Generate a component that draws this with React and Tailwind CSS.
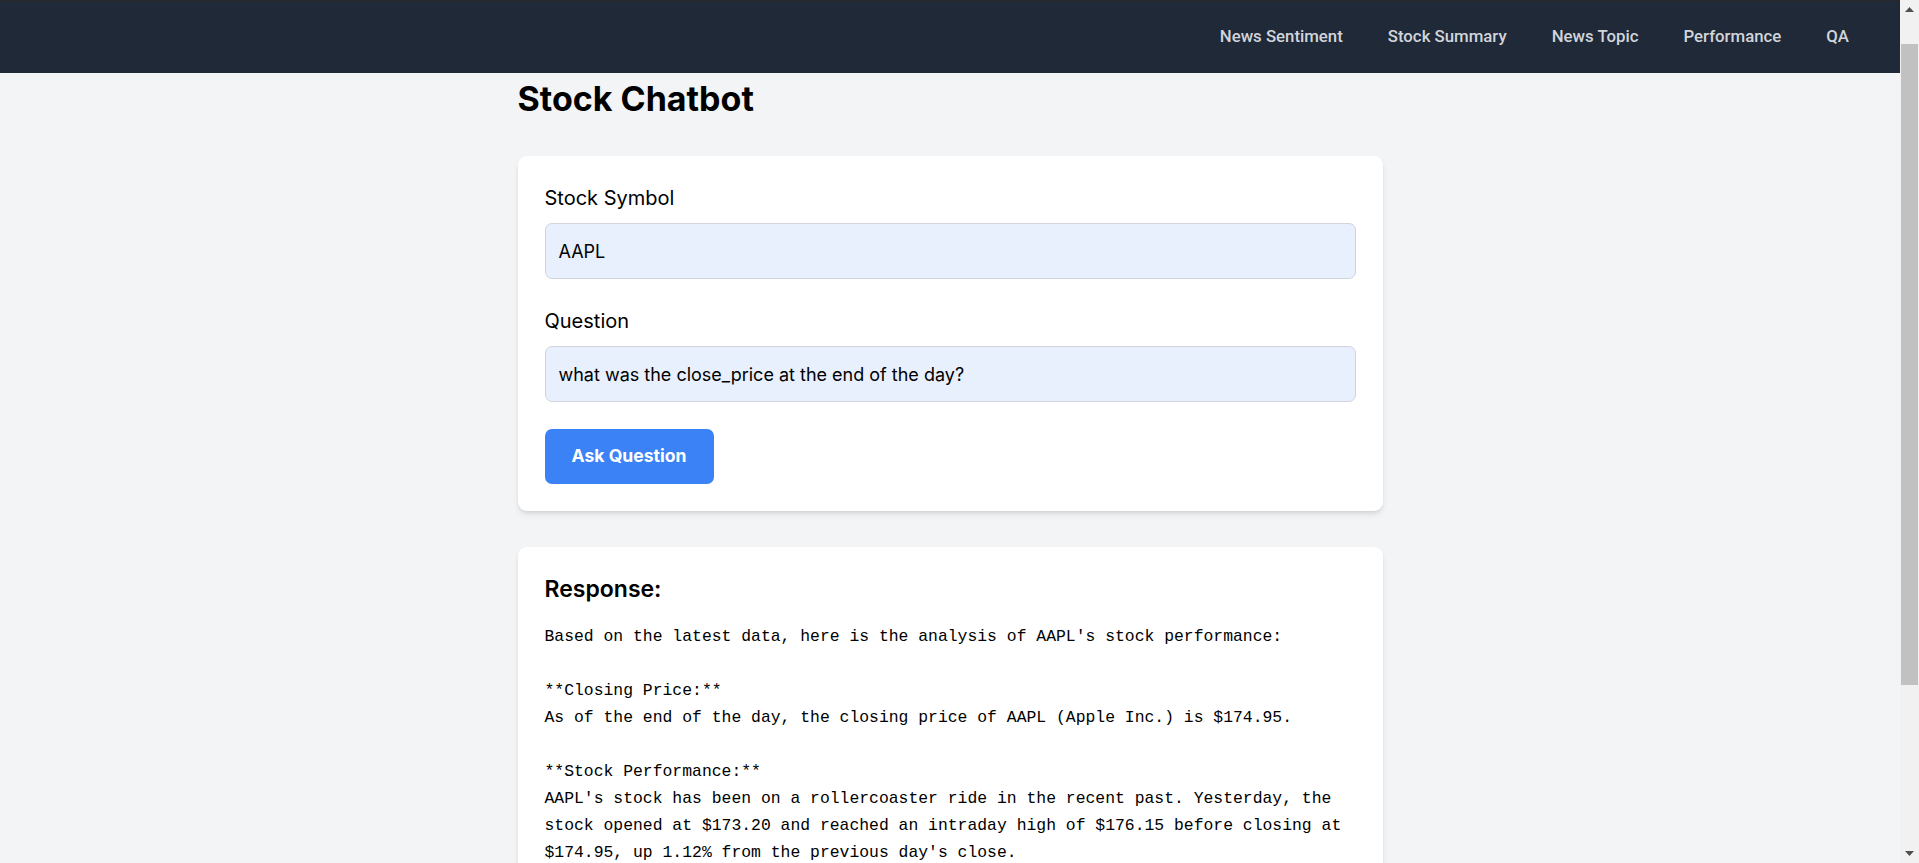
import React from "react";

const navItems = ["News Sentiment", "Stock Summary", "News Topic", "Performance", "QA"];

const responseText = `Based on the latest data, here is the analysis of AAPL's stock performance:

**Closing Price:**
As of the end of the day, the closing price of AAPL (Apple Inc.) is $174.95.

**Stock Performance:**
AAPL's stock has been on a rollercoaster ride in the recent past. Yesterday, the stock opened at $173.20 and reached an intraday high of $176.15 before closing at $174.95, up 1.12% from the previous day's close.

**Trading Volume:**
The trading volume for the day was approximately 58.4 million shares, which is slightly above the 30-day average volume of 55.1 million shares.

**Technical Indicators:**
- 50-day moving average: $171.32
- 200-day moving average: $165.87
- Relative Strength Index (RSI): 58.6

The stock is currently trading above both its 50-day and 200-day moving averages, which suggests a bullish trend in the short to medium term.

**Recent News:**
Investors remain optimistic ahead of the company's upcoming product event, and analysts continue to highlight strong services revenue growth as a key driver for the stock.

**Summary:**
Overall, AAPL closed the day at $174.95, reflecting positive momentum. However, as with any investment, it is important to consider market volatility and conduct your own research before making any investment decisions.`;

function Scrollbar() {
  return (
    <div className="flex h-full w-[19px] shrink-0 flex-col items-center bg-[#f1f1f1]">
      <div className="flex h-[19px] w-full items-center justify-center">
        <svg width="9" height="5" viewBox="0 0 9 5">
          <polygon points="0,5 4.5,0 9,5" fill="#505050" />
        </svg>
      </div>
      <div className="mt-[25px] h-[641px] w-[17px] bg-[#c1c1c1]" />
      <div className="flex-1" />
      <div className="flex h-[19px] w-full items-center justify-center">
        <svg width="9" height="5" viewBox="0 0 9 5">
          <polygon points="0,0 9,0 4.5,5" fill="#505050" />
        </svg>
      </div>
    </div>
  );
}

export default function App() {
  return (
    <div className="flex h-screen overflow-hidden bg-[#f3f4f6] font-['Inter','Noto_Sans',sans-serif] text-black">
      <div className="min-w-0 flex-1 overflow-hidden">
        <nav className="flex h-[73px] items-center justify-end gap-[45px] border-t border-[#2a2a2a] bg-[#1f2937] pr-[51px]">
          {navItems.map((item) => (
            <a key={item} className="font-['Roboto',sans-serif] text-[16.8px] font-medium text-[#d1d5db]">
              {item}
            </a>
          ))}
        </nav>

        <main className="mx-auto w-[865px] pb-[36px]">
          <h1 className="mt-[6px] mb-[37px] text-[34px] font-bold leading-[40px]">Stock Chatbot</h1>

          <div className="rounded-[9px] bg-white p-[27px] shadow-md">
            <label className="mb-[9px] block text-[20px] leading-[31px]">Stock Symbol</label>
            <div className="mb-[27px] flex h-[56px] items-center rounded-[7px] border border-[#d1d5db] bg-[#e8f0fe] px-[13px] text-[18px]">
              AAPL
            </div>

            <label className="mb-[9px] block text-[20px] leading-[31px]">Question</label>
            <div className="mb-[27px] flex h-[56px] items-center rounded-[7px] border border-[#d1d5db] bg-[#e8f0fe] px-[13px] text-[18px]">
              what was the close_price at the end of the day?
            </div>

            <button className="h-[55px] rounded-[7px] bg-[#3b82f6] px-[27px] text-[17.6px] font-bold text-white">
              Ask Question
            </button>
          </div>

          <div className="mt-[36px] rounded-[9px] bg-white p-[27px] shadow-md">
            <h2 className="mb-[18px] text-[23px] font-semibold leading-[31px]">Response:</h2>
            <pre className="whitespace-pre-wrap font-['Liberation_Mono','DejaVu_Sans_Mono',monospace] text-[16.4px] leading-[27px] text-black">
              {responseText}
            </pre>
          </div>
        </main>
      </div>
      <Scrollbar />
    </div>
  );
}
